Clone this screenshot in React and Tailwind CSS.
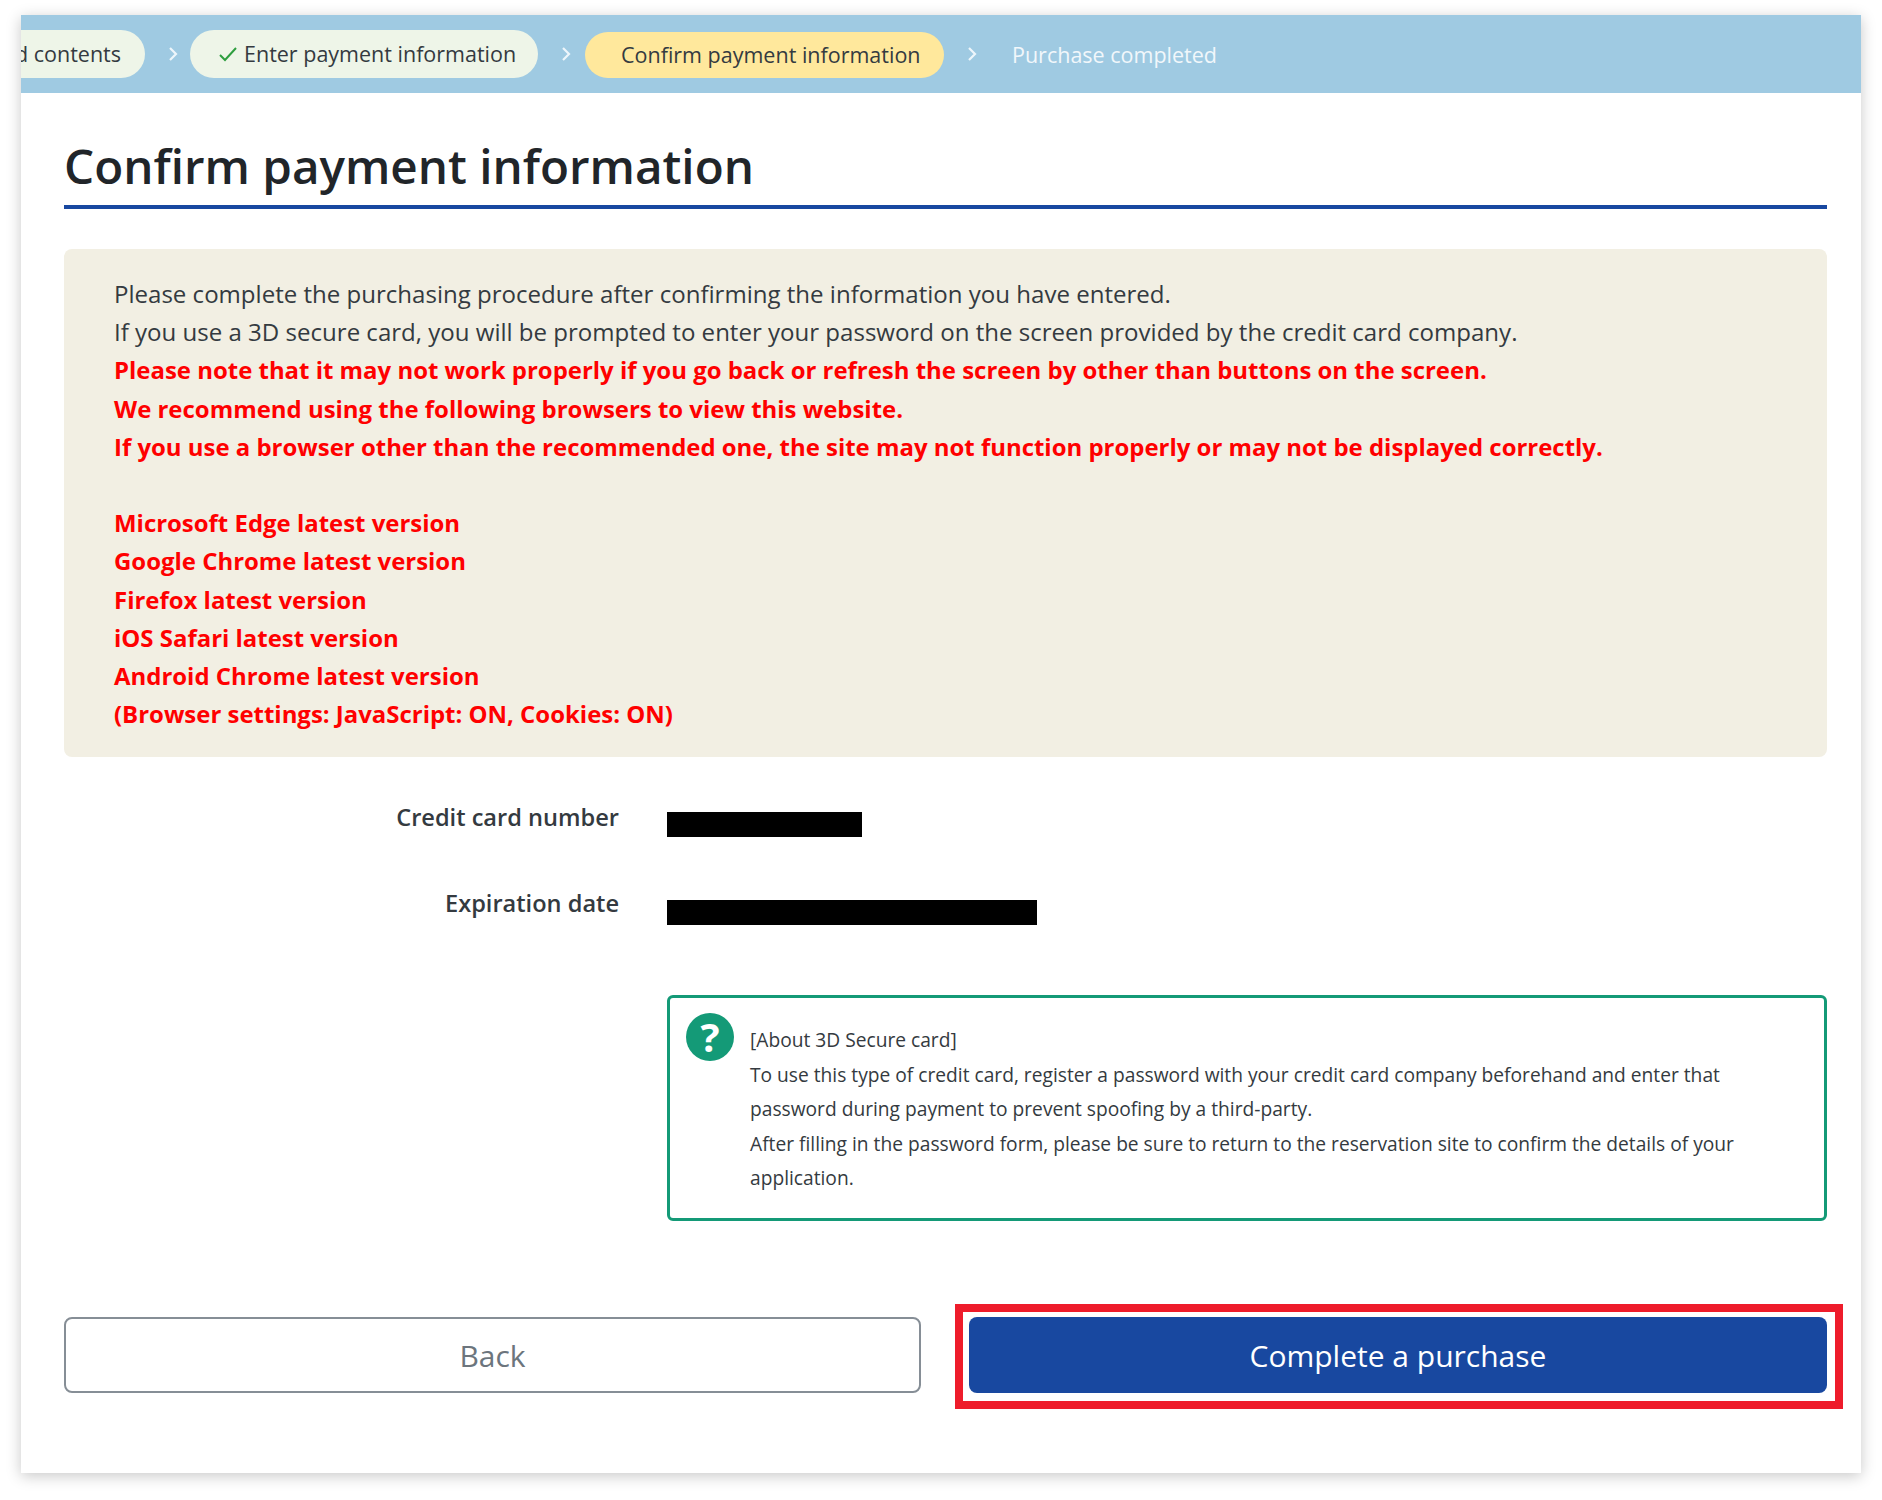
import React from 'react';

const Chevron = ({ className }) => (
    <svg className={className} width="10" height="16" viewBox="0 0 10 16" fill="none" stroke="#eef6fb" strokeWidth="2.2">
        <polyline points="2,2 8,8 2,14" />
    </svg>
);

const Redacted = ({ width }) => <div className={`${width} h-[25px] bg-black`} />;

const Row = ({ label, children, className }) => (
    <div className={`flex ${className}`}>
        <div className="w-[555px] text-right text-[23.6px] leading-[38px] font-semibold text-[#343a40]">{label}</div>
        <div className="ml-[48px] flex-1">{children}</div>
    </div>
);

const notes = [
    'Microsoft Edge latest version',
    'Google Chrome latest version',
    'Firefox latest version',
    'iOS Safari latest version',
    'Android Chrome latest version',
    '(Browser settings: JavaScript: ON, Cookies: ON)',
];

const App = () => {
    return (
        <div className="h-[1500px] bg-white pt-[15px] pl-[21px] font-['Open_Sans',sans-serif]">
            <div className="w-[1840px] h-[1458px] bg-white shadow-[0_3px_14px_rgba(0,0,0,0.22)]">
                <div className="flex items-center h-[78px] bg-[#9fcae2] overflow-hidden text-[21.5px] text-[#343a40] whitespace-nowrap">
                    <div className="flex items-center justify-end w-[124px] h-[48px] pr-[24px] bg-[#eef5e8] rounded-r-full overflow-hidden">
                        <span className="shrink-0">Selected contents</span>
                    </div>
                    <Chevron className="ml-[23px] mr-[12px]" />
                    <div className="flex items-center w-[348px] h-[48px] pl-[28px] bg-[#eef5e8] rounded-full">
                        <svg className="mr-[6px]" width="20" height="16" viewBox="0 0 20 16" fill="none" stroke="#2e9e3f" strokeWidth="2">
                            <polyline points="2,9 7,14 18,2" />
                        </svg>
                        Enter payment information
                    </div>
                    <Chevron className="ml-[23px] mr-[14px]" />
                    <div className="flex items-center w-[359px] h-[46px] mt-[2px] pl-[36px] bg-[#ffe89c] rounded-full">
                        Confirm payment information
                    </div>
                    <Chevron className="ml-[23px] mr-[35px]" />
                    <span className="mt-[2px] text-[#f1f7fb]">Purchase completed</span>
                </div>

                <div className="pl-[43px] w-[1806px]">
                    <h1 className="h-[116px] pt-[39px] text-[47.6px] leading-[68px] font-semibold text-[#212529] border-b-[4px] border-[#1848a0]">
                        Confirm payment information
                    </h1>

                    <div className="mt-[40px] h-[508px] pt-[26px] pl-[50px] bg-[#f2efe3] rounded-[8px] text-[24.05px] leading-[38.2px]">
                        <p className="text-[#343a40]">Please complete the purchasing procedure after confirming the information you have entered.</p>
                        <p className="text-[#343a40]">If you use a 3D secure card, you will be prompted to enter your password on the screen provided by the credit card company.</p>
                        <div className="text-[23.95px] font-bold text-[#ff0000]">
                            <p>Please note that it may not work properly if you go back or refresh the screen by other than buttons on the screen.</p>
                            <p>We recommend using the following browsers to view this website.</p>
                            <p>If you use a browser other than the recommended one, the site may not function properly or may not be displayed correctly.</p>
                            <p className="mt-[38.2px]">{notes[0]}</p>
                            {notes.slice(1).map((note, index) => (
                                <p key={index}>{note}</p>
                            ))}
                        </div>
                    </div>

                    <Row label="Credit card number" className="mt-[41px] h-[86px]">
                        <div className="pt-[14px]"><Redacted width="w-[195px]" /></div>
                    </Row>
                    <Row label="Expiration date" className="h-[87px]">
                        <div className="pt-[16px]"><Redacted width="w-[370px]" /></div>
                    </Row>

                    <div className="flex mt-[24px] ml-[603px] h-[226px] border-[3px] border-[#149a77] rounded-[6px] pl-[16px] pt-[15px]">
                        <div className="flex items-center justify-center shrink-0 w-[48px] h-[48px] rounded-full bg-[#149a77] text-white text-[40px] font-bold leading-none">?</div>
                        <div className="ml-[16px] pt-[10px] pr-[60px] text-[19.2px] leading-[34.5px] text-[#343a40]">
                            <p>[About 3D Secure card]</p>
                            <p>To use this type of credit card, register a password with your credit card company beforehand and enter that password during payment to prevent spoofing by a third-party.</p>
                            <p>After filling in the password form, please be sure to return to the reservation site to confirm the details of your application.</p>
                        </div>
                    </div>

                    <div className="flex gap-[48px] mt-[96px]">
                        <button className="w-[857px] h-[76px] border-2 border-[#868e96] rounded-[8px] text-[30px] text-[#6c757d]">Back</button>
                        <div className="relative w-[858px]">
                            <button className="w-full h-[76px] bg-[#1848a0] rounded-[8px] text-[30px] text-white">Complete a purchase</button>
                            <div className="absolute -left-[14px] -top-[13px] -right-[16px] -bottom-[16px] border-[8px] border-[#ee1c2b]" />
                        </div>
                    </div>
                </div>
            </div>
        </div>
    );
};

export default App;
